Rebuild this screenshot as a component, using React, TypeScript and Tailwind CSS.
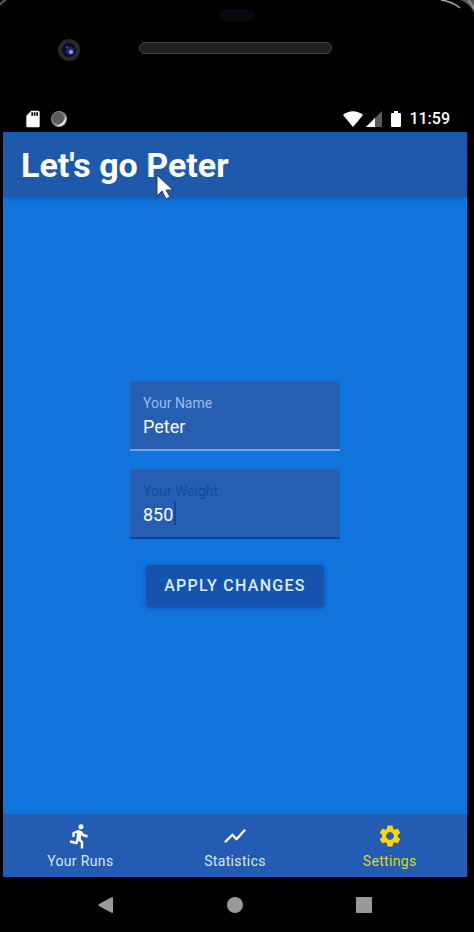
import { useState } from "react";
import type { ReactNode } from "react";
import { MdSdCard, MdSettings, MdShowChart } from "react-icons/md";

function PhoneTop() {
  return (
    <div className="relative h-[105px] overflow-hidden pr-[3px]" aria-hidden="true">
      <svg className="absolute top-0 left-0 h-4 w-4" viewBox="0 0 16 16" fill="none">
        <path d="M0 5C1 3 3 1 6 0" stroke="#55575a" strokeWidth="2" />
      </svg>
      <svg className="absolute top-0 right-0 h-10 w-10" viewBox="0 0 40 40" fill="none">
        <path d="M26 0h14v13C37 6 32 2 26 0Z" fill="#55575b" />
        <path d="M7 0c8 1 13 3 19 8" stroke="#a3a5a8" strokeWidth="1.5" />
        <path d="M34 0c3 3 5 6 6 9" stroke="#8d9094" strokeWidth="2" />
      </svg>
      <div className="absolute top-[9px] left-1/2 h-3 w-9 -translate-x-1/2 rounded-full bg-[#08080e]" />
      <div className="mx-auto mt-[42px] h-3 w-[193px] rounded-full border border-[#484542] bg-[#211f1d]" />
      <svg className="absolute top-[38px] left-[57px] h-6 w-6" viewBox="0 0 24 24">
        <circle cx="12" cy="12" r="11" fill="#29292b" />
        <circle cx="12" cy="12" r="7" fill="#0b0d2c" />
        <circle cx="13" cy="13" r="4" fill="#202b72" />
        <circle cx="14" cy="14" r="2" fill="#8d9cff" />
        <circle cx="10" cy="9" r="1" fill="#4651b8" />
      </svg>
    </div>
  );
}

function StatusBar() {
  return (
    <div className="flex h-[27px] items-center justify-between pr-[17px] pl-5 text-white">
      <div className="flex items-center gap-2">
        <MdSdCard className="h-5 w-5" />
        <svg className="h-4 w-4" viewBox="0 0 16 16">
          <circle cx="8" cy="8" r="8" fill="#8a8a8a" />
          <path d="M15 5a8 8 0 0 1-10 10C10 14 14 10 15 5Z" fill="#e8e8e8" />
          <circle cx="7" cy="7" r="6" fill="#5c5c5c" />
        </svg>
      </div>
      <div className="flex items-center">
        <svg className="h-4 w-5" viewBox="0 0 20 16" fill="currentColor">
          <path d="M0 4C6-1 14-1 20 4L10 16Z" />
        </svg>
        <svg className="ml-[3px] h-4 w-4" viewBox="0 0 16 16">
          <path d="M0 16 16 0v16Z" fill="#5a5a5a" />
          <path d="M0 16 9 7v9Z" fill="#fff" />
        </svg>
        <svg className="ml-[9px] h-4 w-[10px]" viewBox="0 0 10 16" fill="currentColor">
          <path d="M3 0h4v2h2q1 0 1 1v12q0 1-1 1H1q-1 0-1-1V3q0-1 1-1h2Z" />
        </svg>
        <span className="ml-2 text-base leading-5 font-medium">11:59</span>
      </div>
    </div>
  );
}

function RunnerIcon() {
  return (
    <svg
      className="h-[26px] w-[26px]"
      viewBox="0 0 26 26"
      fill="none"
      stroke="currentColor"
      strokeWidth="2.4"
      strokeLinejoin="round"
      aria-hidden="true"
    >
      <circle cx="14" cy="3.7" r="2.5" fill="currentColor" stroke="none" />
      <path d="m10 8 5 1-1.500 8-4-1Z" fill="currentColor" stroke="none" />
      <path d="M6.500 14V10l5-2 2.500 1 2 3 4.500 1.500" />
      <path d="m11.500 14-2 6-6.500-1.500" />
      <path d="m11 15.500 4 3.500v6.500" />
    </svg>
  );
}

type FieldProps = {
  id: string;
  label: string;
  value: string;
  onChange: (value: string) => void;
  active?: boolean;
};

function Field({ id, label, value, onChange, active = false }: FieldProps) {
  return (
    <div
      className={`relative flex h-[70px] flex-col rounded-t border-b-2 bg-[#265eb1] px-[13px] pt-3 ${
        active ? "border-[#0d47a1]" : "border-[#7da3da]"
      }`}
    >
      <label
        htmlFor={id}
        className={`text-sm leading-5 ${active ? "text-[#124ba3]" : "text-[#9abbe8]"}`}
      >
        {label}
      </label>
      <input
        id={id}
        value={value}
        onChange={(event) => onChange(event.target.value)}
        className="h-7 w-full bg-transparent text-lg leading-7 text-white outline-none"
      />
      {active && <span className="absolute top-8 left-11 h-6 w-0.5 bg-[#0d47a1]" />}
    </div>
  );
}

function NavItem({ icon, label, active = false }: { icon: ReactNode; label: string; active?: boolean }) {
  return (
    <a
      href="#"
      aria-current={active ? "page" : undefined}
      className={`flex flex-1 flex-col items-center pt-[9px] ${active ? "text-[#ffd600]" : "text-white"}`}
    >
      {icon}
      <span
        className={`text-sm leading-6 tracking-wide ${active ? "text-[#dfd52b]" : "text-[#d4e8ff]"}`}
      >
        {label}
      </span>
    </a>
  );
}

export default function App() {
  const [name, setName] = useState("Peter");
  const [weight, setWeight] = useState("850");

  return (
    <div className="flex min-h-screen flex-col bg-black font-[Roboto,sans-serif]">
      <PhoneTop />
      <div className="mr-[7px] ml-[3px] flex flex-1 flex-col">
        <StatusBar />
        <header className="relative z-10 flex h-[65px] items-center bg-[#1f59ac] px-[18px] shadow-[0_5px_4px_-4px_#1252a8]">
          <h1 className="text-[34px] leading-10 font-bold text-white">Let's go Peter</h1>
          <svg className="absolute top-[42px] left-[153px] h-7 w-5" viewBox="0 0 20 28" aria-hidden="true">
            <path
              d="M1 1v21l5-5 4 8 4-2-4-7h7Z"
              fill="#fff"
              stroke="#283a60"
              strokeWidth="1"
              strokeLinejoin="round"
            />
          </svg>
        </header>

        <main className="flex flex-1 flex-col items-center justify-center bg-[#1173dc] pb-6">
          <form
            className="flex w-[210px] flex-col items-center"
            onSubmit={(event) => event.preventDefault()}
          >
            <div className="flex w-full flex-col gap-[18px]">
              <Field id="name" label="Your Name" value={name} onChange={setName} />
              <Field id="weight" label="Your Weight" value={weight} onChange={setWeight} active />
            </div>
            <button
              type="submit"
              className="mt-[26px] h-[42px] rounded bg-[#1653ae] px-[18px] text-base font-medium tracking-[0.08em] whitespace-nowrap text-[#dcecff] shadow-[0_1px_4px_#0b51b0]"
            >
              APPLY CHANGES
            </button>
          </form>
        </main>

        <nav className="flex h-[63px] bg-[#245cb4]">
          <NavItem icon={<RunnerIcon />} label="Your Runs" />
          <NavItem icon={<MdShowChart className="h-[26px] w-[26px]" />} label="Statistics" />
          <NavItem icon={<MdSettings className="h-[26px] w-[26px]" />} label="Settings" active />
        </nav>

        <div className="flex h-[55px] items-center justify-center gap-[113px]">
          <button type="button" aria-label="Back">
            <svg className="h-4 w-4" viewBox="0 0 16 16" fill="#999">
              <path d="M1 7 14 0q1 0 1 1v14q0 1-1 1L1 9q-1-1 0-2Z" />
            </svg>
          </button>
          <button type="button" aria-label="Home" className="h-4 w-4 rounded-full bg-[#999]" />
          <button type="button" aria-label="Overview" className="h-4 w-4 rounded-[1px] bg-[#999]" />
        </div>
      </div>
    </div>
  );
}
